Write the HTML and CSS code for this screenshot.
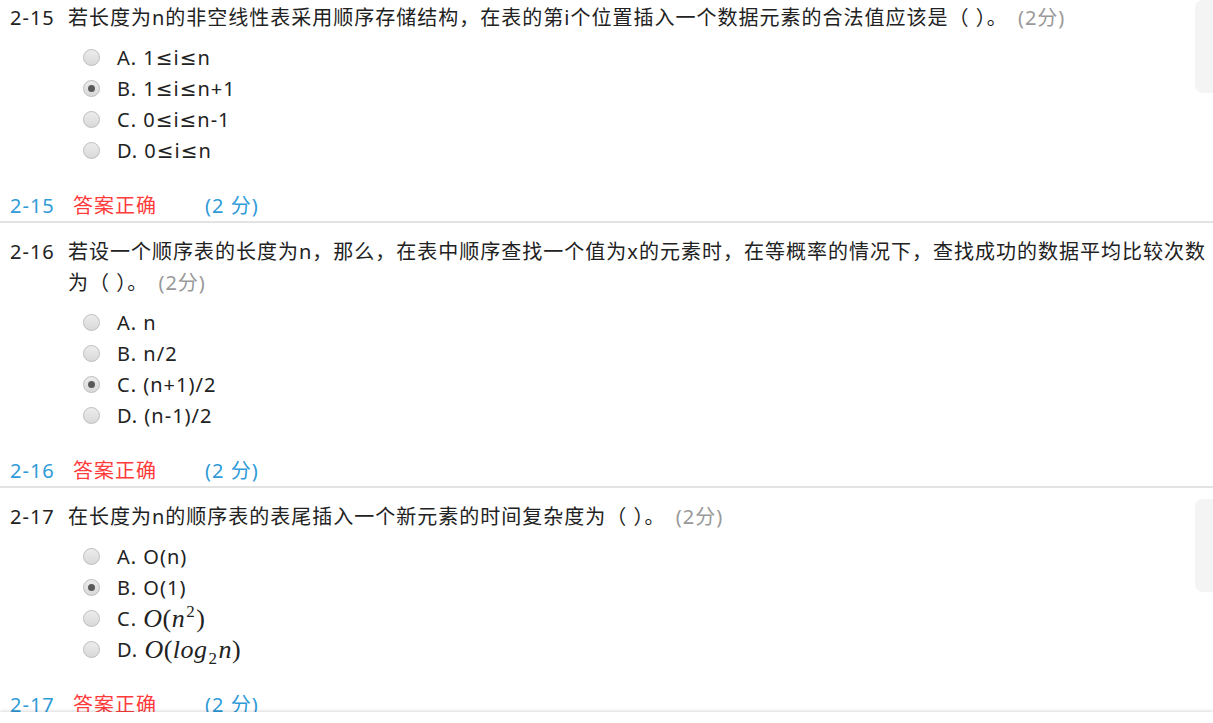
FILE: index.html
```html
<!DOCTYPE html>
<html lang="zh-CN">

<head>
  <meta charset="utf-8">
  <title>题目解答</title>

  <link rel="stylesheet" href="styles.css">
</head>

<body>

  <div class="paper">

    <div class="question">
      <div class="q-title">
        <span class="q-num">2-15</span>
        <span class="q-text">若长度为n的非空线性表采用顺序存储结构，在表的第i个位置插入一个数据元素的合法值应该是（ ）。 <span class="q-score">(2分)</span></span>
        <div class="side-tab"></div>
      </div>
      <ul class="options">
        <li class="option"><span class="radio"></span>A. 1≤i≤n</li>
        <li class="option"><span class="radio checked"></span>B. 1≤i≤n+1</li>
        <li class="option"><span class="radio"></span>C. 0≤i≤n-1</li>
        <li class="option"><span class="radio"></span>D. 0≤i≤n</li>
      </ul>
      <div class="result">
        <span class="r-num">2-15</span><span class="r-status">答案正确</span><span class="r-score">(2 分)</span>
      </div>
    </div>

    <div class="question">
      <div class="q-title">
        <span class="q-num">2-16</span>
        <span class="q-text">若设一个顺序表的长度为n，那么，在表中顺序查找一个值为x的元素时，在等概率的情况下，查找成功的数据平均比较次数为（ ）。 <span class="q-score">(2分)</span></span>
      </div>
      <ul class="options">
        <li class="option"><span class="radio"></span>A. n</li>
        <li class="option"><span class="radio"></span>B. n/2</li>
        <li class="option"><span class="radio checked"></span>C. (n+1)/2</li>
        <li class="option"><span class="radio"></span>D. (n-1)/2</li>
      </ul>
      <div class="result">
        <span class="r-num">2-16</span><span class="r-status">答案正确</span><span class="r-score">(2 分)</span>
      </div>
    </div>

    <div class="question">
      <div class="q-title">
        <span class="q-num">2-17</span>
        <span class="q-text">在长度为n的顺序表的表尾插入一个新元素的时间复杂度为（ ）。 <span class="q-score">(2分)</span></span>
        <div class="side-tab"></div>
      </div>
      <ul class="options">
        <li class="option"><span class="radio"></span>A. O(n)</li>
        <li class="option"><span class="radio checked"></span>B. O(1)</li>
        <li class="option"><span class="radio"></span>C.&nbsp;<span class="math"><i>O</i>(<i>n</i><sup>2</sup>)</span></li>
        <li class="option"><span class="radio"></span>D.&nbsp;<span class="math"><i>O</i>(<i>log</i><sub>2</sub><i>n</i>)</span></li>
      </ul>
      <div class="result">
        <span class="r-num">2-17</span><span class="r-status">答案正确</span><span class="r-score">(2 分)</span>
      </div>
    </div>

  </div>

  <div class="bottom-bar"></div>

</body>

</html>
```

FILE: styles.css
```css
body {
  margin: 0;
  color: #222;
  background-color: white;
  font-family: "Noto Sans", "DejaVu Sans", "Noto Sans CJK SC", sans-serif;
  font-size: 20px;
  letter-spacing: 1px;
  overflow: hidden;
}

.question {
  padding: 13px 0 0 10px;
  border-bottom: 2px solid #e3e3e3;
}

.question:first-child {
  padding-top: 2px;
}

.q-title {
  position: relative;
  display: flex;
  line-height: 31px;
}

.q-num {
  width: 58px;
  flex-shrink: 0;
}

.q-text {
  flex: 1;
}

.q-score {
  margin-left: 4px;
  color: #999;
}

.side-tab {
  position: absolute;
  top: -2px;
  right: 0;
  width: 18px;
  height: 93px;
  background-color: #f4f4f4;
  border-radius: 8px 0 0 8px;
}

.options {
  list-style: none;
  margin: 9px 0 0 73px;
  padding: 0;
}

.option {
  display: flex;
  align-items: center;
  min-height: 31px;
  line-height: 31px;
}

.radio {
  box-sizing: border-box;
  width: 17px;
  height: 17px;
  margin-right: 17px;
  border: 1px solid #bdbdbd;
  border-radius: 50%;
  background: linear-gradient(#ececec, #d9d9d9);
  display: flex;
  align-items: center;
  justify-content: center;
}

.radio.checked::after {
  content: "";
  width: 7px;
  height: 7px;
  border-radius: 50%;
  background-color: #5a5a5a;
}

.math {
  font-family: "Liberation Serif", serif;
  font-size: 26px;
  letter-spacing: 0.5px;
}

.math sup,
.math sub {
  font-style: normal;
  font-size: 17px;
  line-height: 0;
  margin: 0 1px;
}

.result {
  margin-top: 24px;
  line-height: 31px;
  color: #2f9bd8;
}

.r-num {
  display: inline-block;
  width: 63px;
}

.r-status {
  display: inline-block;
  width: 132px;
  color: #ff3b3b;
}

.bottom-bar {
  position: fixed;
  left: 0;
  right: 0;
  bottom: 0;
  height: 11px;
  background-color: white;
  box-shadow: 0 -1px 3px rgba(0, 0, 0, 0.15);
}
```
